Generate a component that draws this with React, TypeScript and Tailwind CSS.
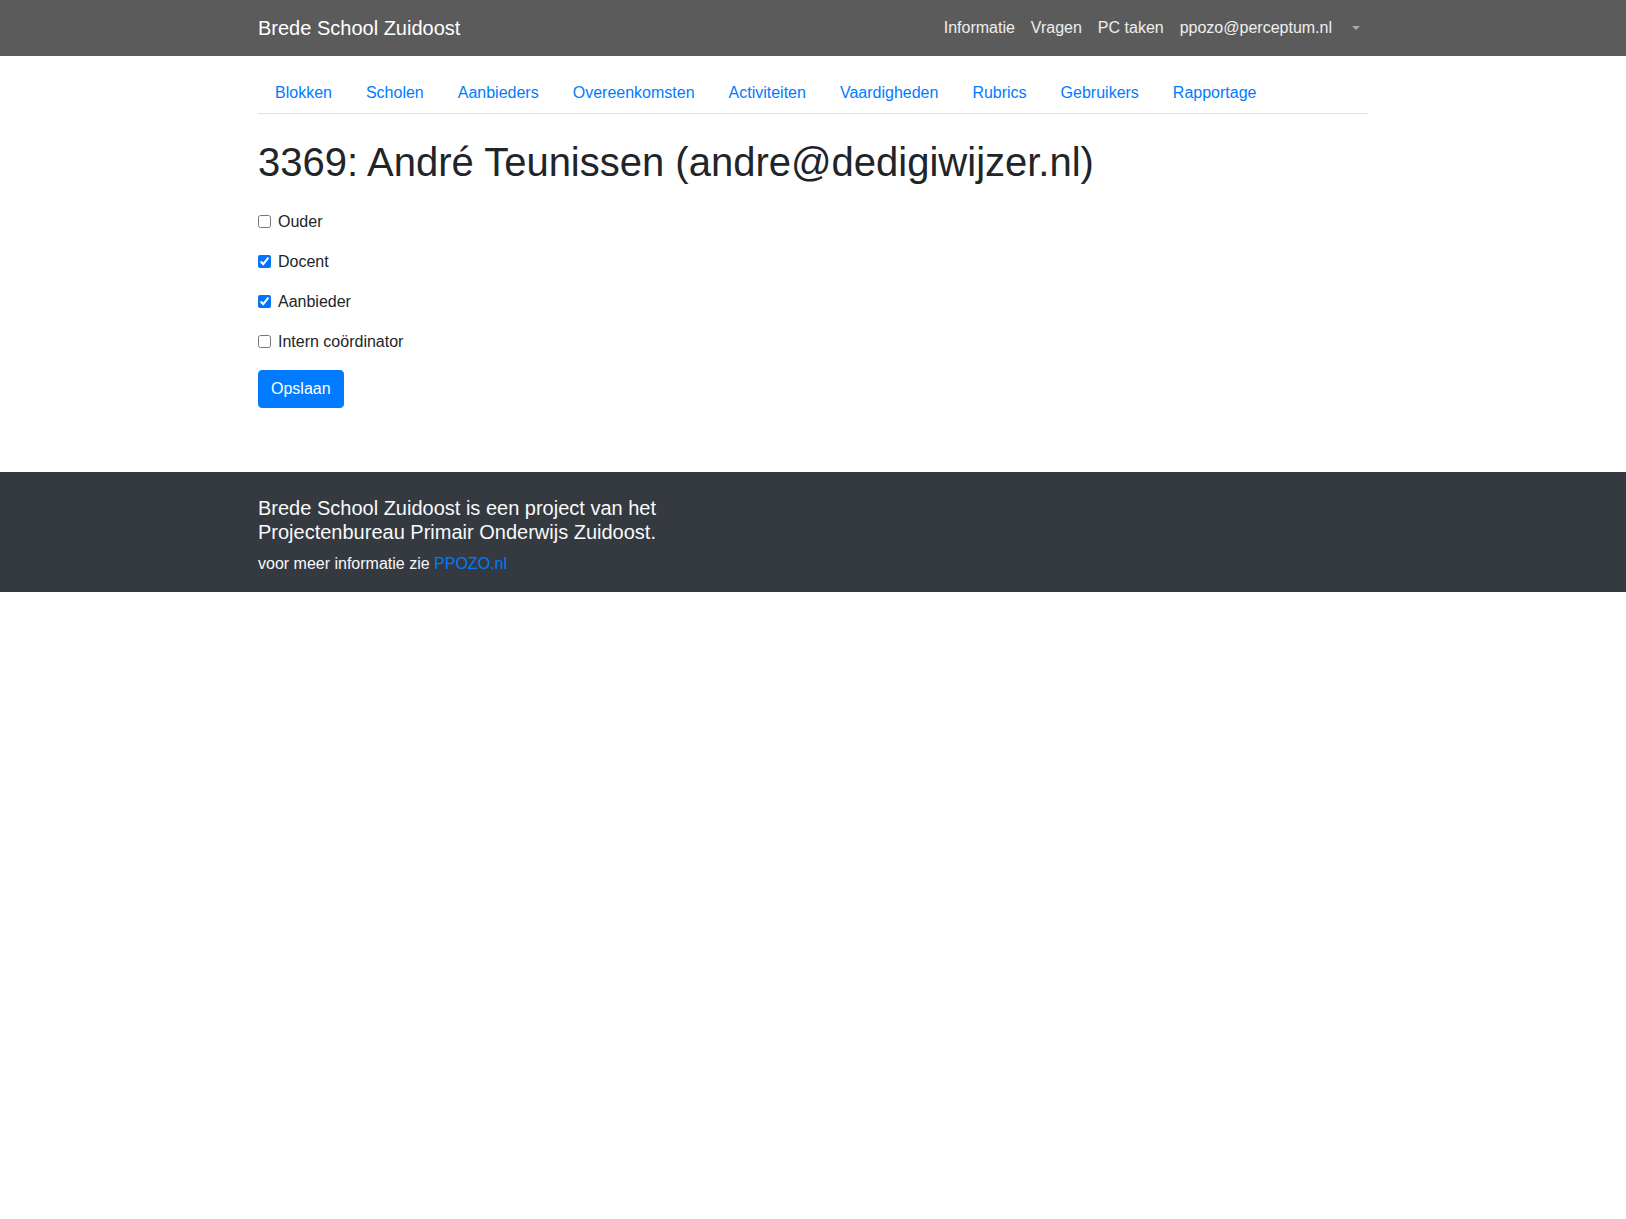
import { useState } from 'react';

const topLinks = ['Informatie', 'Vragen', 'PC taken', 'ppozo@perceptum.nl'];
const tabs = ['Blokken', 'Scholen', 'Aanbieders', 'Overeenkomsten', 'Activiteiten', 'Vaardigheden', 'Rubrics', 'Gebruikers', 'Rapportage'];

const App = () => {
  const [roles, setRoles] = useState([
    { label: 'Ouder', checked: false },
    { label: 'Docent', checked: true },
    { label: 'Aanbieder', checked: true },
    { label: 'Intern coördinator', checked: false },
  ]);

  const toggle = (i: number) =>
    setRoles(roles.map((r, j) => (j === i ? { ...r, checked: !r.checked } : r)));

  return (
    <div className="bg-white text-[#212529] text-base leading-6" style={{ fontFamily: '"Liberation Sans", Arial, sans-serif' }}>
      <nav className="bg-[#5b5b5b] h-14">
        <div className="w-[1110px] mx-auto h-full flex items-center justify-between">
          <span className="text-white text-xl leading-[30px]">Brede School Zuidoost</span>
          <div className="flex items-center">
            {topLinks.map((l) => (
              <a key={l} href="#" className="px-2 py-2 text-white/90">{l}</a>
            ))}
            <a href="#" className="pl-3 pr-2 py-2 flex items-center h-10">
              <span className="block w-0 h-0 border-l-4 border-r-4 border-t-4 border-l-transparent border-r-transparent border-t-[#a8a8a8]" />
            </a>
          </div>
        </div>
      </nav>

      <main className="w-[1110px] mx-auto pb-16">
        <ul className="flex mt-[17px] border-b border-[#dee2e6]">
          {tabs.map((t) => (
            <li key={t}>
              <a href="#" className="block px-[17px] py-2 text-[#007bff]">{t}</a>
            </li>
          ))}
        </ul>

        <h1 className="mt-6 mb-6 text-[40px] leading-[48px] font-medium">3369: André Teunissen (andre@dedigiwijzer.nl)</h1>

        <form onSubmit={(e) => e.preventDefault()}>
          {roles.map((r, i) => (
            <div key={r.label} className="mb-4 flex items-start">
              <input
                type="checkbox"
                id={`role-${i}`}
                checked={r.checked}
                onChange={() => toggle(i)}
                className="w-[13px] h-[13px] mt-[5px] shrink-0"
              />
              <label htmlFor={`role-${i}`} className="pl-[7px]">{r.label}</label>
            </div>
          ))}
          <button type="submit" className="bg-[#007bff] text-white border border-[#007bff] rounded px-3 py-1.5 leading-6">
            Opslaan
          </button>
        </form>
      </main>

      <footer className="bg-[#343a40] text-[#f8f9fa] pt-6 pb-4">
        <div className="w-[1110px] mx-auto">
          <div className="w-[445px]">
            <h5 className="text-xl leading-6 mb-2 font-medium">Brede School Zuidoost is een project van het Projectenbureau Primair Onderwijs Zuidoost.</h5>
            <p>
              voor meer informatie zie <a href="#" className="text-[#007bff]">PPOZO.nl</a>
            </p>
          </div>
        </div>
      </footer>
    </div>
  );
};

export default App;
